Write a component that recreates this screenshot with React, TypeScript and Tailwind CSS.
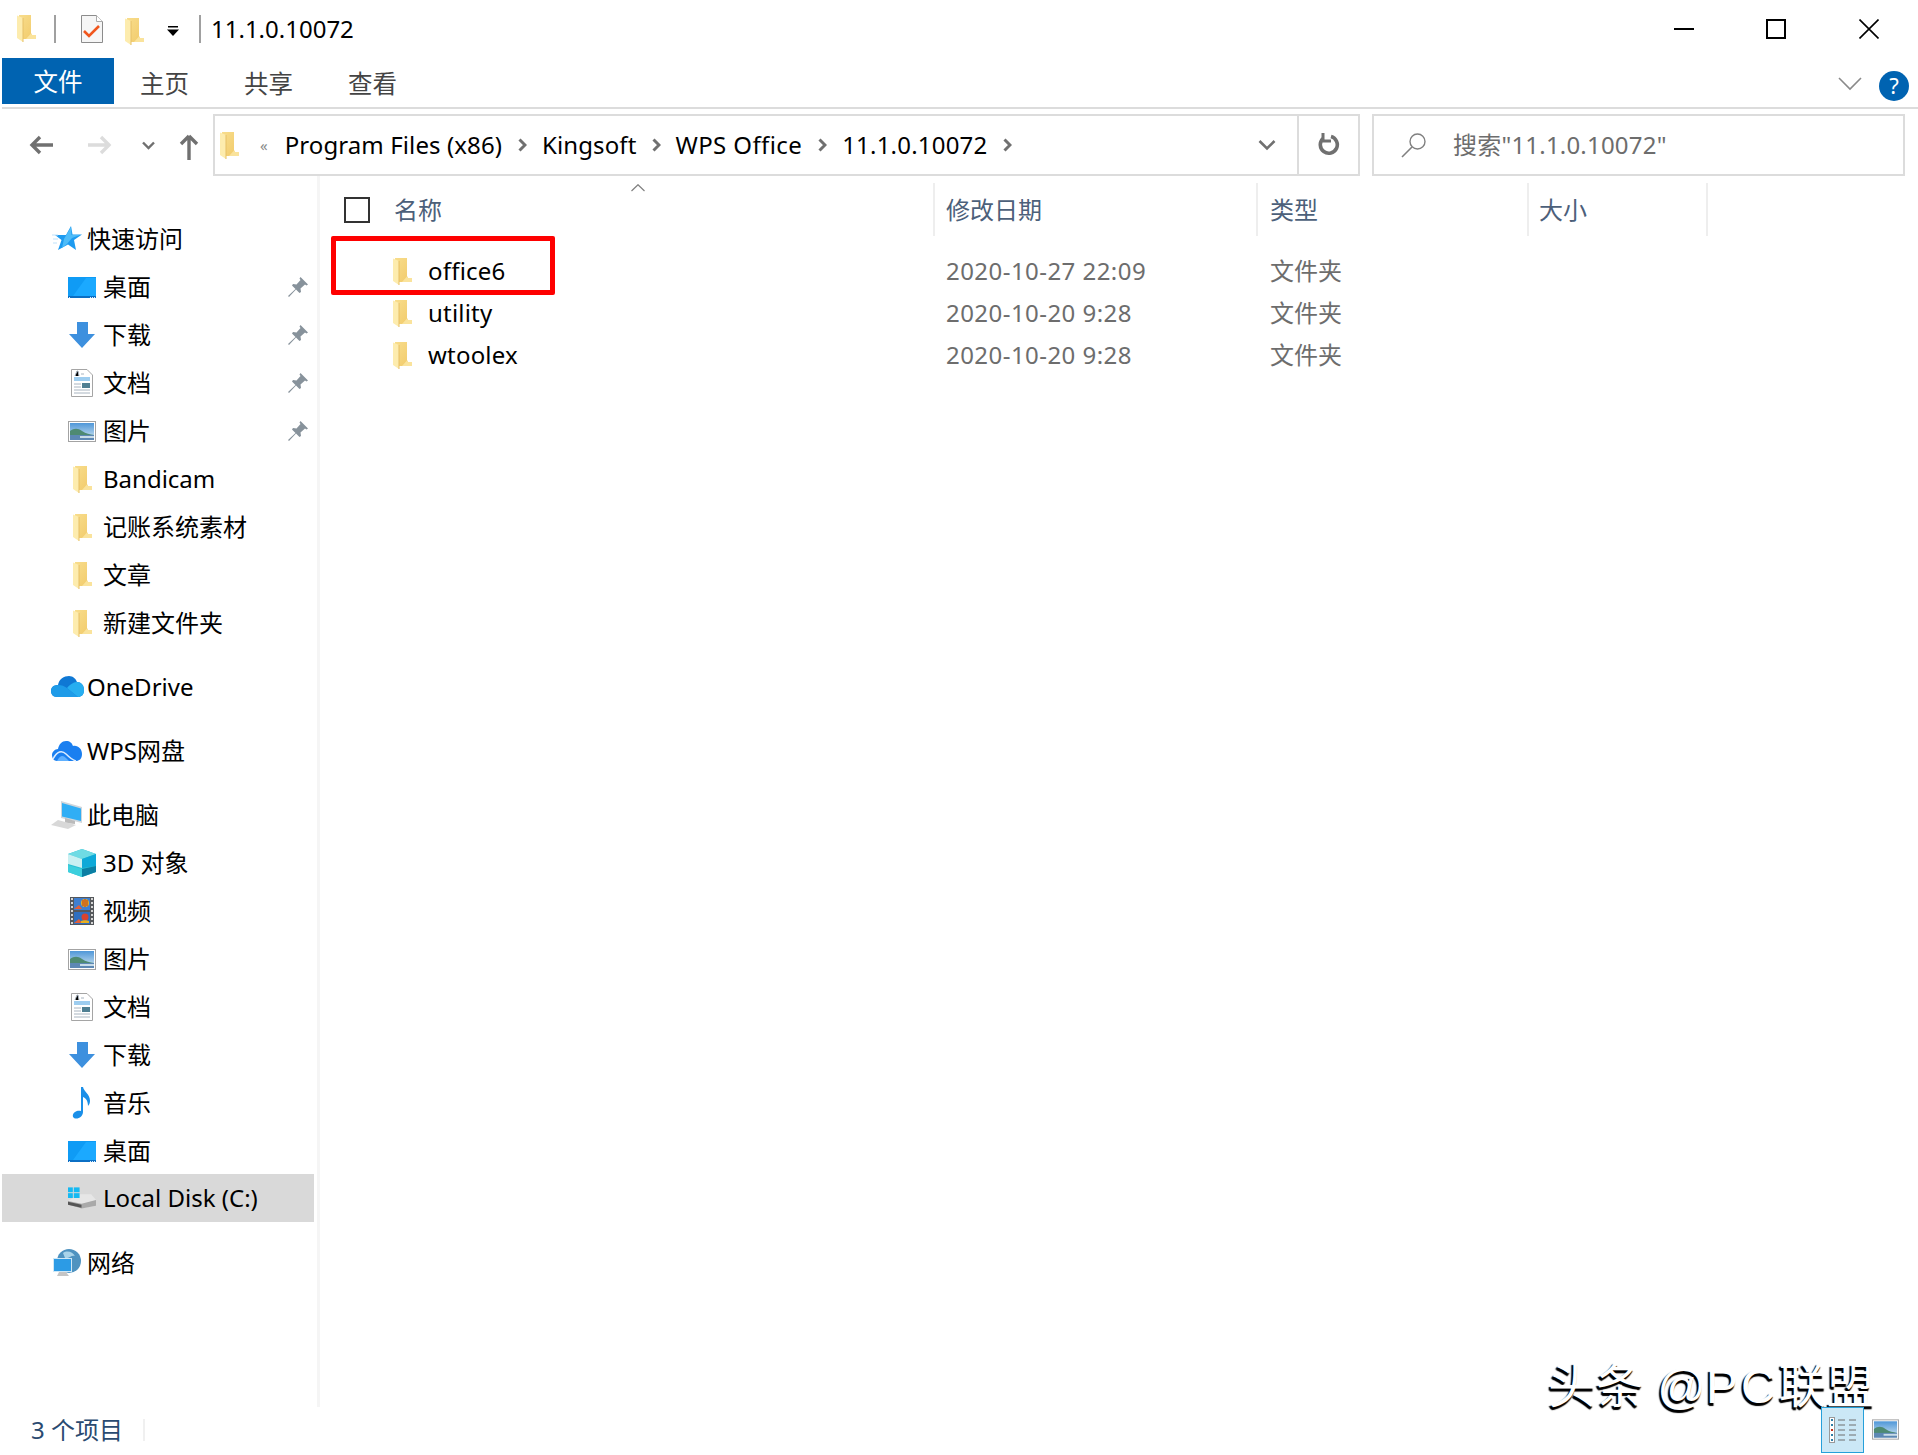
import { ReactNode, useId } from "react";

const FONT = "font-['Noto_Sans','Noto_Sans_CJK_SC',sans-serif]";

function Folder({ className = "" }: { className?: string }) {
  const id = useId();
  return (
    <svg className={className} width="19" height="27" viewBox="0 0 19 27">
      <defs>
        <linearGradient id={id} x1="0" y1="0" x2="1" y2="1">
          <stop offset="0" stopColor="#f8dd8c" />
          <stop offset="1" stopColor="#f1c968" />
        </linearGradient>
      </defs>
      <path d="M2 0H14V18L15 20H19V24H5L2 22Z" fill={`url(#${id})`} />
      <path d="M14 18.5L15 20H19V24H9Z" fill="#fae39c" />
      <path d="M0 .5L6 3V27L0 23Z" fill="#fdecae" />
      <path d="M6 3V27" stroke="#e6c066" />
    </svg>
  );
}

function DesktopIcon() {
  return (
    <svg width="28" height="21" viewBox="0 0 28 21">
      <rect width="28" height="21" fill="#0f9bf5" />
      <path d="M5 19L18 1H28V19Z" fill="#1ba9ff" />
      <rect y="19" width="28" height="2" fill="#0b6fc4" />
      <path d="M1 20.5H3M22 20.5H27" stroke="#d8ecff" strokeDasharray="1 1" />
    </svg>
  );
}

function DownloadIcon() {
  return (
    <svg width="26" height="26" viewBox="0 0 26 26">
      <path d="M8 0H19V12H26L13 26L0 12H8Z" fill="#3d90de" />
    </svg>
  );
}

function DocIcon() {
  return (
    <svg width="22" height="28" viewBox="0 0 22 28">
      <path d="M.5.5H16L21.5 6V27.5H.5Z" fill="#fff" stroke="#a5a5a5" />
      <path d="M3 9H19M3 11H19" stroke="#3d9be0" />
      <path d="M4 7L6 2H7L8 7M10 5H13M3 15H10M3 18H10M3 21H19M3 24H19" stroke="#a8b4c0" />
      <rect x="11" y="14" width="8" height="5" fill="#4f7f92" />
    </svg>
  );
}

function PictureIcon({ small = false }: { small?: boolean }) {
  const id = useId();
  return (
    <svg width={small ? 27 : 28} height="21" viewBox="0 0 28 21">
      <defs>
        <linearGradient id={id} x1="0" y1="0" x2="0" y2="1">
          <stop offset="0" stopColor="#4f97d8" />
          <stop offset="1" stopColor="#d5e8f2" />
        </linearGradient>
      </defs>
      <rect x=".5" y=".5" width="27" height="20" fill="#fff" stroke="#a3a3a3" />
      <rect x="2" y="2" width="24" height="17" fill={`url(#${id})`} />
      <path d="M2 10C6 7 10 7 14 10S22 13 26 14H2Z" fill="#4e8a72" />
      <path d="M2 14H26V19H2Z" fill="#5d88b4" />
      <path d="M12 15H26V17H12Z" fill="#c9dce8" />
    </svg>
  );
}

function CubeIcon() {
  return (
    <svg width="28" height="28" viewBox="0 0 28 28">
      <path d="M14 0L28 5V23L14 28L0 23V5Z" fill="#29bfd3" />
      <path d="M14 0L28 5L14 10L0 5Z" fill="#6fdbe4" />
      <path d="M0 5L14 10V19L0 15Z" fill="#c9f0f2" />
      <path d="M14 10L28 5V17L14 19Z" fill="#0ea9d8" />
      <path d="M14 20L28 17V23L14 28Z" fill="#0b7ea3" />
      <path d="M0 16L14 20V28L0 23Z" fill="#3ccfdd" />
    </svg>
  );
}

function VideoIcon() {
  return (
    <svg width="24" height="28" viewBox="0 0 24 28">
      <rect width="24" height="28" fill="#55585c" />
      <path d="M2 1V27M22 1V27" stroke="#d5d5d5" strokeWidth="2" strokeDasharray="2 2" />
      <rect x="4" y="1" width="16" height="12" fill="#3f7fd0" />
      <rect x="4" y="15" width="16" height="12" fill="#2f6fc0" />
      <circle cx="15" cy="6" r="4" fill="#e8b022" />
      <path d="M15 2V10M13 3V9M17 3V9" stroke="#b8341c" />
      <circle cx="15" cy="20" r="3.5" fill="#d9432d" />
      <path d="M4 12L9 8L12 12ZM4 26L9 22L12 26Z" fill="#e2603a" />
      <path d="M11 26H19V24C17 23 13 23 11 24Z" fill="#e8b022" />
    </svg>
  );
}

function MusicIcon() {
  return (
    <svg width="20" height="32" viewBox="0 0 20 32">
      <path d="M9 0H11C12 5 18 7 18 14C18 16 17 18 16 19C16 14 14 11 11 10V25C11 29 7 32 3.5 31.5C0 31 0 27 3 25C5 23.5 7 23.5 9 24Z" fill="#1a8fe8" />
    </svg>
  );
}

function DiskIcon() {
  return (
    <svg width="29" height="22" viewBox="0 0 29 22">
      <path d="M0 14L12 7H24L29 13V19L12 22L0 18Z" fill="#e6e6e6" />
      <path d="M0 14L14 17L29 13V19L14 22L0 18Z" fill="#a9a9a9" />
      <path d="M0 15L14 18V21L0 18Z" fill="#555" />
      <rect x="0" y="0" width="5" height="5" fill="#15b9f2" />
      <rect x="6" y="0" width="6" height="5" fill="#15b9f2" />
      <rect x="0" y="6" width="5" height="5" fill="#15b9f2" />
      <rect x="6" y="6" width="6" height="5" fill="#15b9f2" />
    </svg>
  );
}

function StarIcon() {
  return (
    <svg width="30" height="26" viewBox="0 0 30 26">
      <path d="M19 0L20.5 8.5H30L22 14L24 24L16 18.5L6 24L9.5 14L3 9H14Z" fill="#1d9bf0" />
      <path d="M19 1L19.5 9H28L20 12L15 18L10 22L12 13Z" fill="#4fbcf8" />
      <path d="M0 9H6M1 13H6M1 17H5" stroke="#bfe2fb" />
    </svg>
  );
}

function OneDriveIcon() {
  return (
    <svg width="33" height="22" viewBox="0 0 33 22">
      <path d="M7 9C8 3 13 0 18 0C22 0 25 3 26 6C30 6 33 9 33 14C33 19 30 21 27 21H6C2 21 0 18 0 15C0 11 3 9 7 9Z" fill="#0f78d4" />
      <path d="M0 15C0 11 3 9 7 9C11 9 13 10 16 12L27 21H6C2 21 0 18 0 15Z" fill="#1e9be8" />
      <path d="M16 12C20 7 24 6 26 6C30 6 33 9 33 14C33 19 30 21 27 21Z" fill="#27aef0" />
    </svg>
  );
}

function WpsCloudIcon() {
  return (
    <svg width="30" height="21" viewBox="0 0 30 21">
      <path d="M6 8C7 3 10 0 14 0C18 0 20 2 21 5C26 4 30 8 30 13C30 18 27 20 24 20H5C2 20 0 17 0 14C0 11 3 8 6 8Z" fill="#1a7ff0" />
      <path d="M1 18C5 10 10 9 14 13S20 19 24 20" fill="none" stroke="#dcecff" strokeWidth="1.5" />
      <path d="M5 20C8 14 11 14 14 17L17 20Z" fill="#5fb0ff" />
    </svg>
  );
}

function ComputerIcon() {
  return (
    <svg width="32" height="28" viewBox="0 0 32 28">
      <path d="M10 0L31 6V22L10 17Z" fill="#cfd6dc" />
      <path d="M11 2L30 7.5V20L11 15.5Z" fill="#30aef5" />
      <path d="M14 17L24 20V23L14 22Z" fill="#bbb" />
      <path d="M7 19L25 24L17 28L0 24Z" fill="#d8d8d8" />
    </svg>
  );
}

function NetworkIcon() {
  return (
    <svg width="28" height="28" viewBox="0 0 28 28">
      <circle cx="16" cy="12" r="12" fill="#4f93c0" />
      <path d="M10 4C14 1 20 3 22 7C18 6 16 10 12 9Z" fill="#a9d4ea" />
      <rect x="0" y="9" width="19" height="14" fill="#cfe7f5" />
      <rect x="1" y="10" width="17" height="12" fill="#2c9be5" />
      <path d="M6 23H13L16 27H4Z" fill="#c5c5c5" />
    </svg>
  );
}

function Pin() {
  return (
    <svg width="20" height="20" viewBox="0 0 20 20">
      <path d="M12.5 0L20 7.5L18.5 8.5L17 7.5L12.5 11.5L13 15L11.5 16L8 12.5L1 20L0 19L7.5 12L4 8.5L5 7L8.5 7.5L12.5 3L11.5 1.5Z" fill="#87929b" />
    </svg>
  );
}

function Chevron({ className = "" }: { className?: string }) {
  return (
    <svg className={className} width="9" height="14" viewBox="0 0 9 14">
      <path d="M1.5 1.5L7 7L1.5 12.5" fill="none" stroke="#707070" strokeWidth="3" />
    </svg>
  );
}

function NavRow({ icon, label, pinned, selected }: { icon: ReactNode; label: string; pinned?: boolean; selected?: boolean }) {
  return (
    <div className={`flex h-12 items-center ${selected ? "-mt-px mb-px ml-0.5 w-[312px] bg-[#d9d9d9]" : "w-[314px]"}`}>
      <span className={`flex w-[28px] justify-center ${selected ? "ml-[66px]" : "ml-[68px]"}`}>{icon}</span>
      <span className="ml-[7px] text-black">{label}</span>
      {pinned && (
        <span className="ml-auto mr-[6px]">
          <Pin />
        </span>
      )}
    </div>
  );
}

function TopRow({ icon, label, className = "" }: { icon: ReactNode; label: string; className?: string }) {
  return (
    <div className={`flex h-12 w-[314px] items-center ${className}`}>
      <span className="ml-[50px] flex w-[34px] justify-center">{icon}</span>
      <span className="ml-[3px] text-black">{label}</span>
    </div>
  );
}

function FileRow({ name, date }: { name: string; date: string }) {
  return (
    <div className="flex h-[42px] items-center">
      <span className="ml-[73px] flex w-[19px]">
        <Folder />
      </span>
      <span className="ml-[16px] w-[518px] tracking-[0.2px] text-black">{name}</span>
      <span className="w-[324px] tracking-[0.45px] text-[#6d6d6d]">{date}</span>
      <span className="text-[#6d6d6d]">文件夹</span>
    </div>
  );
}

export default function App() {
  return (
    <div className={`relative flex h-[1455px] w-[1918px] flex-col overflow-hidden bg-white text-2xl ${FONT}`}>
      {/* Title bar */}
      <div className="relative flex h-[58px] items-center">
        <Folder className="ml-[17px] -mt-[1px]" />
        <span className="ml-[18px] h-[28px] w-0.5 bg-[#a0a0a0]" />
        <svg className="ml-[25px]" width="22" height="28" viewBox="0 0 22 28">
          <path d="M.5.5H15.5L21.5 6.5V27.5H.5Z" fill="#f6f6f6" stroke="#8c8c8c" />
          <path d="M15.5.5V6.5H21.5" fill="#fff" stroke="#aaa" />
          <path d="M3 16L8 21L18 11" fill="none" stroke="#f0561d" strokeWidth="2.6" />
        </svg>
        <Folder className="ml-[22px] mt-[4px]" />
        <svg className="ml-[23px] mt-[3px]" width="12" height="10" viewBox="0 0 12 10">
          <rect x="1" width="10" height="1.5" fill="#000" />
          <path d="M0 3.5H12L6 10Z" fill="#000" />
        </svg>
        <span className="ml-[20px] h-[28px] w-0.5 bg-[#a0a0a0]" />
        <span className="ml-[10px] text-black">11.1.0.10072</span>
        {/* Window buttons */}
        <div className="ml-auto mr-[39px] flex items-center">
          <span className="h-0.5 w-5 bg-black" />
          <span className="ml-[72px] h-5 w-5 border-2 border-black" />
          <svg className="ml-[73px]" width="20" height="20" viewBox="0 0 20 20">
            <path d="M.5.5L19.5 19.5M19.5.5L.5 19.5" stroke="#000" strokeWidth="1.6" />
          </svg>
        </div>
      </div>

      {/* Ribbon tabs */}
      <div className="ml-0.5 flex h-[51px] items-start border-b-2 border-[#dcdcdc] text-[24.5px]">
        <div className="flex h-[46px] w-[112px] items-center justify-center bg-[#0063b1] pt-[3px] text-white">文件</div>
        <div className="ml-[26px] mt-[6px] flex h-10 items-center text-[#444]">主页</div>
        <div className="ml-[55px] mt-[6px] flex h-10 items-center text-[#444]">共享</div>
        <div className="ml-[55px] mt-[6px] flex h-10 items-center text-[#444]">查看</div>
        <div className="ml-auto mr-[9px] flex h-[46px] items-center">
          <svg className="mt-[6px]" width="24" height="14" viewBox="0 0 24 14">
            <path d="M1 1L12 12L23 1" fill="none" stroke="#8a8a8a" strokeWidth="1.6" />
          </svg>
          <span className="ml-[17px] mt-[9px] flex h-[30px] w-[30px] items-center justify-center rounded-full bg-[#0063b1] text-[22px] text-white">?</span>
        </div>
      </div>

      {/* Address row */}
      <div className="mt-[5px] flex h-[62px] items-center">
        <svg className="ml-[29px]" width="24" height="20" viewBox="0 0 24 20">
          <path d="M11 2L3 10L11 18M3 10H24" fill="none" stroke="#707070" strokeWidth="3.4" />
        </svg>
        <svg className="ml-[35px]" width="24" height="20" viewBox="0 0 24 20">
          <path d="M13 2L21 10L13 18M21 10H0" fill="none" stroke="#dcdcdc" strokeWidth="3.4" />
        </svg>
        <svg className="ml-[30px]" width="13" height="9" viewBox="0 0 13 9">
          <path d="M1 1.5L6.5 7L12 1.5" fill="none" stroke="#707070" strokeWidth="2.4" />
        </svg>
        <svg className="ml-[24px] mt-[4px]" width="20" height="26" viewBox="0 0 20 26">
          <path d="M10 2L2 10M10 2L18 10M10 2V26" fill="none" stroke="#707070" strokeWidth="3.4" />
        </svg>
        <div className="ml-[14px] flex h-[62px] w-[1147px] items-center border-2 border-[#dcdcdc]">
          <Folder className="ml-[5px]" />
          <span className="ml-[21px] text-[15px] text-[#8a8a8a]">«</span>
          <span className="ml-[17px] tracking-[0.1px] text-black">Program Files (x86)</span>
          <Chevron className="ml-[16px]" />
          <span className="ml-[15px] tracking-[0.1px] text-black">Kingsoft</span>
          <Chevron className="ml-[16px]" />
          <span className="ml-[14px] tracking-[0.4px] text-black">WPS Office</span>
          <Chevron className="ml-[16px]" />
          <span className="ml-[15px] tracking-[0.2px] text-black">11.1.0.10072</span>
          <Chevron className="ml-[16px]" />
          <svg className="ml-[246px]" width="18" height="12" viewBox="0 0 18 12">
            <path d="M1.5 2L9 9.5L16.5 2" fill="none" stroke="#707070" strokeWidth="2.6" />
          </svg>
          <span className="ml-[21px] h-full w-0.5 bg-[#dcdcdc]" />
          <svg className="ml-[19px]" width="22" height="26" viewBox="0 0 22 26">
            <path d="M13 4.5A8.5 8.5 0 1 1 5 6.5" fill="none" stroke="#707070" strokeWidth="3.6" />
            <path d="M5 1V9H13" fill="none" stroke="#707070" strokeWidth="3" />
          </svg>
        </div>
        <div className="ml-3 flex h-[62px] w-[533px] items-center border-2 border-[#dcdcdc]">
          <svg className="ml-[27px]" width="26" height="26" viewBox="0 0 26 26">
            <circle cx="16.5" cy="9.5" r="7.5" fill="none" stroke="#808080" strokeWidth="1.4" />
            <path d="M11 15L1 25" stroke="#808080" strokeWidth="1.6" />
          </svg>
          <span className="ml-[26px] tracking-[0.2px] text-[#6d6d6d]">搜索"11.1.0.10072"</span>
        </div>
      </div>

      {/* Body */}
      <div className="flex min-h-0 flex-1">
        {/* Navigation pane */}
        <div className="flex w-[320px] flex-col border-r-[3px] border-[#f5f5f5] pt-[39px]">
          <TopRow icon={<StarIcon />} label="快速访问" />
          <NavRow icon={<DesktopIcon />} label="桌面" pinned />
          <NavRow icon={<DownloadIcon />} label="下载" pinned />
          <NavRow icon={<DocIcon />} label="文档" pinned />
          <NavRow icon={<PictureIcon />} label="图片" pinned />
          <NavRow icon={<Folder />} label="Bandicam" />
          <NavRow icon={<Folder />} label="记账系统素材" />
          <NavRow icon={<Folder />} label="文章" />
          <NavRow icon={<Folder />} label="新建文件夹" />
          <TopRow icon={<OneDriveIcon />} label="OneDrive" className="mt-4" />
          <TopRow icon={<WpsCloudIcon />} label="WPS网盘" className="mt-4" />
          <TopRow icon={<ComputerIcon />} label="此电脑" className="mt-4" />
          <NavRow icon={<CubeIcon />} label="3D 对象" />
          <NavRow icon={<VideoIcon />} label="视频" />
          <NavRow icon={<PictureIcon />} label="图片" />
          <NavRow icon={<DocIcon />} label="文档" />
          <NavRow icon={<DownloadIcon />} label="下载" />
          <NavRow icon={<MusicIcon />} label="音乐" />
          <NavRow icon={<DesktopIcon />} label="桌面" />
          <NavRow icon={<DiskIcon />} label="Local Disk (C:)" selected />
          <TopRow icon={<NetworkIcon />} label="网络" className="mt-4" />
        </div>

        {/* File list */}
        <div className="relative flex min-w-0 flex-1 flex-col">
          <div className="relative flex h-[60px] items-center pt-[7px] text-[#4c607a]">
            <span className="ml-[24px] h-[26px] w-[26px] border-2 border-[#333]" />
            <span className="ml-[24px] w-[539px]">名称</span>
            <span className="h-full w-0.5 bg-[#eeeeee]" />
            <span className="ml-[11px] w-[310px]">修改日期</span>
            <span className="h-full w-0.5 bg-[#eeeeee]" />
            <span className="ml-[12px] w-[257px]">类型</span>
            <span className="h-full w-0.5 bg-[#eeeeee]" />
            <span className="ml-[10px] w-[167px]">大小</span>
            <span className="h-full w-0.5 bg-[#eeeeee]" />
            <svg className="absolute left-[311px] top-[8px]" width="14" height="8" viewBox="0 0 14 8">
              <path d="M.5 7L7 .7L13.5 7" fill="none" stroke="#808080" strokeWidth="1.2" />
            </svg>
          </div>
          <div className="pt-[14px]">
            <FileRow name="office6" date="2020-10-27 22:09" />
            <FileRow name="utility" date="2020-10-20 9:28" />
            <FileRow name="wtoolex" date="2020-10-20 9:28" />
          </div>
          {/* Red annotation around office6 */}
          <div className="absolute left-[11px] top-[60px] h-[59px] w-[224px] rounded-[2px] border-[5px] border-[#fe0000]" />
        </div>
      </div>

      {/* Status bar */}
      <div className="flex h-[48px] items-center pb-[3px]">
        <span className="ml-[31px] text-[#2a4a70]">3 个项目</span>
        <span className="ml-[20px] h-[22px] w-0.5 bg-[#f0f0f0]" />
      </div>

      {/* Watermark */}
      <div className="absolute left-[1548px] top-[1355px] whitespace-nowrap font-['Liberation_Sans','Noto_Sans_CJK_SC',sans-serif] text-[48px] text-white [text-shadow:-2px_2px_1px_#000,-1px_3px_1px_#000]">
        头条 @<span className="tracking-[3px]">PC</span>联盟
      </div>

      {/* View buttons */}
      <div className="absolute left-[1821px] top-[1407px] flex h-[46px] w-[43px] items-center justify-center border border-[#26a0da] bg-[#cbe8f6]">
        <svg width="28" height="26" viewBox="0 0 28 26">
          <rect x=".5" y=".5" width="5" height="25" fill="#fff" stroke="#999" />
          <path d="M2 3H4M2 8H4M2 18H4M2 23H4" stroke="#2f7fa8" strokeWidth="2" />
          <path d="M2 13H4" stroke="#c0301c" strokeWidth="2" />
          <path d="M9 3H16M20 3H27M9 8H16M20 8H27M9 13H16M20 13H27M9 18H16M20 18H27M9 23H16M20 23H27" stroke="#6f6f6f" />
        </svg>
      </div>
      <div className="absolute left-[1872px] top-[1419px]">
        <PictureIcon small />
      </div>
    </div>
  );
}
